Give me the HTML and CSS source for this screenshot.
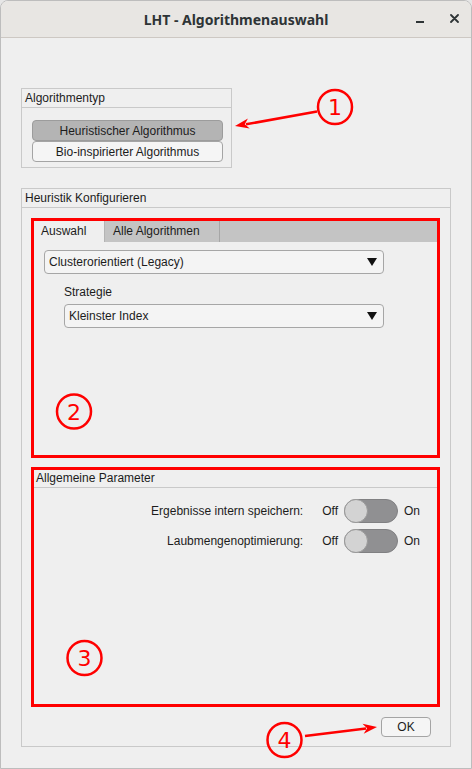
FILE: index.html
```html
<!DOCTYPE html>
<html lang="de">
<head>
<meta charset="utf-8">
<title>LHT - Algorithmenauswahl</title>
<link rel="stylesheet" href="styles.css">
</head>
<body>
<div class="window">
  <header class="titlebar">
    <span class="spacer"></span>
    <span class="title">LHT - Algorithmenauswahl</span>
    <div class="controls">
      <span class="min"></span>
      <svg class="close" width="9" height="9" viewBox="0 0 9 9"><path d="M1 1 L8 8 M8 1 L1 8" stroke="#2e3436" stroke-width="1.8" stroke-linecap="round"/></svg>
    </div>
  </header>
  <main class="content">
    <section class="group g-type">
      <div class="group-head">Algorithmentyp</div>
      <div class="type-body">
        <button class="tbtn active">Heuristischer Algorithmus</button>
        <button class="tbtn">Bio-inspirierter Algorithmus</button>
      </div>
    </section>
    <section class="group g-heur">
      <div class="group-head">Heuristik Konfigurieren</div>
      <div class="heur-body">
        <div class="mark">
          <div class="tabbar">
            <div class="tab sel">Auswahl</div>
            <div class="tab tab2">Alle Algorithmen</div>
          </div>
          <div class="tabcontent">
            <div class="combo c1"><span>Clusterorientiert (Legacy)</span><svg class="arr" width="10" height="8" viewBox="0 0 10 8"><polygon points="0,0 10,0 5,8" fill="#111"/></svg></div>
            <div class="field">
              <div class="field-label">Strategie</div>
              <div class="combo c2"><span>Kleinster Index</span><svg class="arr" width="10" height="8" viewBox="0 0 10 8"><polygon points="0,0 10,0 5,8" fill="#111"/></svg></div>
            </div>
          </div>
        </div>
        <div class="mark mark-params">
          <div class="params-head">Allgemeine Parameter</div>
          <div class="params-body">
            <span class="plabel">Ergebnisse intern speichern:</span>
            <span class="off">Off</span>
            <span class="toggle"><span class="knob"></span></span>
            <span class="on">On</span>
            <span class="plabel">Laubmengenoptimierung:</span>
            <span class="off">Off</span>
            <span class="toggle"><span class="knob"></span></span>
            <span class="on">On</span>
          </div>
        </div>
        <div class="footer"><button class="ok">OK</button></div>
      </div>
    </section>
  </main>
  <svg class="annot" width="472" height="769" viewBox="0 0 472 769">
    <g fill="none" stroke="#ff0000" stroke-width="2.5">
      <circle cx="335" cy="107" r="17"/>
      <circle cx="74" cy="411.5" r="17"/>
      <circle cx="84.5" cy="658" r="17"/>
      <circle cx="284.5" cy="740" r="17"/>
      <line x1="317" y1="111.5" x2="246" y2="124.3"/>
      <line x1="305" y1="736" x2="366" y2="728.4"/>
    </g>
    <g fill="#ff0000">
      <polygon points="235,126 247.9,118.6 244.8,124.2 249.7,128.4"/>
      <polygon points="377,727 362.5,723.7 367.1,728.2 363.7,733.7"/>
    </g>
    <g class="digits" fill="#ff0000" text-anchor="middle">
      <text x="335" y="115">1</text>
      <text x="74" y="419.5">2</text>
      <text x="84.5" y="666">3</text>
      <text x="284.5" y="748">4</text>
    </g>
  </svg>
</div>
</body>
</html>
```
FILE: styles.css
```css
* { box-sizing: border-box; margin: 0; padding: 0; }
html, body { width: 472px; height: 769px; overflow: hidden; background: #e6e6e6; }
body { font-family: "Liberation Sans", Arial, sans-serif; font-size: 12px; color: #1c1c1c; }

.window {
  position: relative;
  width: 472px;
  height: 769px;
  border: 1px solid #bdbdbd;
  border-radius: 8px 8px 0 0;
  background: #efefef;
  overflow: hidden;
}

.titlebar {
  height: 37px;
  display: grid;
  grid-template-columns: 1fr auto 1fr;
  align-items: center;
  background: #e8e6e3;
  border-bottom: 1px solid #cdc8c3;
}
.title {
  font-family: "Noto Sans", "DejaVu Sans", sans-serif;
  font-weight: 700;
  font-size: 14px;
  color: #2e3436;
  padding-top: 1px;
}
.controls {
  justify-self: end;
  display: flex;
  align-items: center;
  gap: 26px;
  padding-right: 12px;
}
.min {
  display: block;
  width: 8px;
  height: 2px;
  background: #2e3436;
  margin-top: 6px;
}
.close { display: block; margin-top: -1px; }

.content { padding: 50px 0 0 20px; }

.group { border: 1px solid #c9c9c9; }
.group-head {
  height: 19px;
  border-bottom: 1px solid #c9c9c9;
  padding-left: 3px;
  line-height: 18px;
}

.g-type { width: 211px; }
.type-body {
  padding: 12px 8px 5px 10px;
  display: flex;
  flex-direction: column;
}
.tbtn {
  width: 191px;
  height: 21px;
  border: 1px solid #a4a4a4;
  border-radius: 4px;
  background: #f5f5f5;
  font: inherit;
  color: inherit;
}
.tbtn.active { background: #b4b4b4; border-color: #9c9c9c; }

.g-heur { width: 430px; margin-top: 20px; }
.heur-body {
  padding: 10px 10px 9px 9px;
  display: flex;
  flex-direction: column;
}

.mark { border: 3px solid #ff0000; height: 240px; }
.mark-params { margin-top: 9px; }

.tabbar {
  height: 21px;
  background: #c4c4c4;
  display: flex;
}
.tab { line-height: 21px; }
.tab.sel { width: 71px; background: #efefef; padding-left: 7px; border-right: 1px solid #b4b4b4; }
.tab2 { width: 115px; border-right: 1px solid #a6a6a6; padding-left: 8px; }

.tabcontent { padding: 8px 0 0 10px; }
.combo {
  height: 24px;
  border: 1px solid #a6a6a6;
  border-radius: 4px;
  background: #f4f4f4;
  display: flex;
  align-items: center;
  justify-content: space-between;
  padding: 0 6px 0 4px;
}
.arr { display: block; }
.c1 { width: 340px; }
.field { margin-top: 10px; padding-left: 20px; }
.field-label { height: 16px; line-height: 16px; }
.c2 { width: 320px; margin-top: 4px; }

.params-head {
  height: 18px;
  border-bottom: 1px solid #c9c9c9;
  padding-left: 2px;
  line-height: 17px;
}
.params-body {
  padding: 11px 17px 0 0;
  display: grid;
  grid-template-columns: 1fr auto auto auto;
  row-gap: 6px;
  align-items: center;
}
.plabel { text-align: right; }
.off { margin-left: 19px; margin-right: 6px; }
.on { margin-left: 6px; }
.toggle {
  display: flex;
  width: 54px;
  height: 24px;
  border-radius: 12px;
  background: #909092;
  border: 1px solid #808082;
}
.knob {
  width: 24px;
  height: 24px;
  margin: -1px 0 0 -1px;
  border-radius: 50%;
  background: #d3d3d3;
  border: 1px solid #9a9a9a;
}

.footer {
  margin-top: 10px;
  display: flex;
  justify-content: flex-end;
  padding-right: 9px;
}
.ok {
  width: 50px;
  height: 20px;
  border: 1px solid #a4a4a4;
  border-radius: 4px;
  background: #f5f5f5;
  font: inherit;
  color: inherit;
}

.annot {
  position: absolute;
  top: -1px;
  left: -1px;
  pointer-events: none;
}
.digits text {
  font-family: "DejaVu Sans", sans-serif;
  font-size: 22px;
}
```
